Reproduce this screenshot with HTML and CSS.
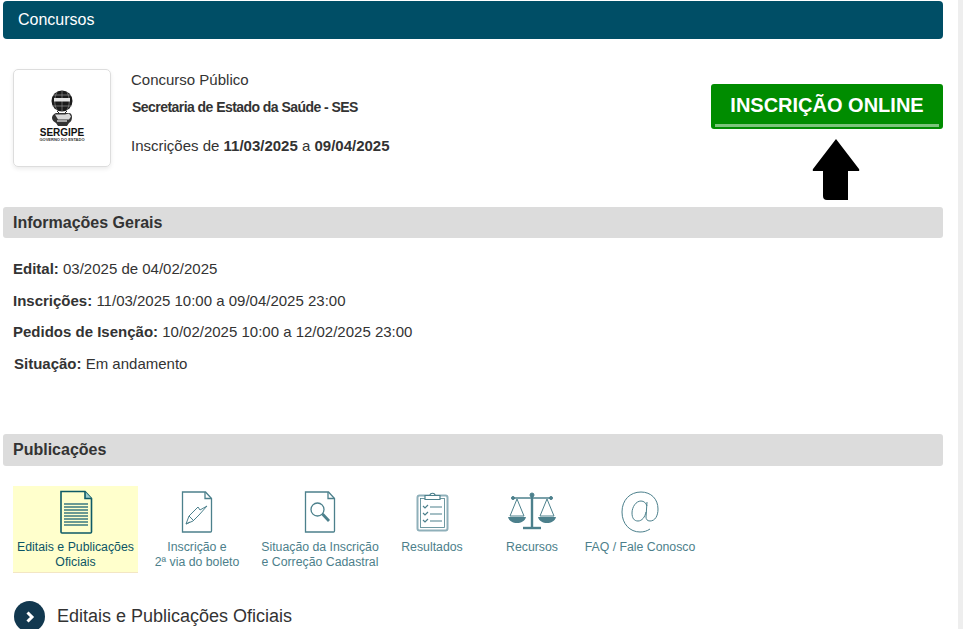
FILE: index.html
```html
<!DOCTYPE html>
<html lang="pt-BR">
<head>
<meta charset="utf-8">
<title>Concursos</title>
<link rel="stylesheet" href="styles.css">
</head>
<body>
<div class="scrollstrip"></div>
<main class="page">
  <header class="title">Concursos</header>

  <section class="summary">
    <div class="logo-card">
      <div class="logo">
        <svg class="logo-mark" width="24" height="37" viewBox="0 0 24 37">
          <circle cx="12" cy="11" r="10.500" fill="#1a1a1a"/>
          <path d="M3 5h18M1.800 16h20.400" stroke="#aaa" stroke-width=".6"/>
          <path d="M12 .5v21M7 2c-3 6-3 13 0 18M17 2c3 6 3 13 0 18" stroke="#999" stroke-width=".6" fill="none"/>
          <rect x="4" y="8" width="16" height="3.500" fill="#e4e4e4"/>
          <path d="M7 21l3 3M17 21l-3 3" stroke="#222" stroke-width="1"/>
          <path d="M2 28c0-3 3-5 5-5h12c2 0 3 2 3 4 0 3-1 5-3 6l-2 3H8l-2-3c-2-1-4-3-4-5z" fill="#333"/>
          <path d="M5 24.500h10l4-1 2 3-2 3H8z" fill="#d8d8d8"/>
          <path d="M7 31h10" stroke="#ccc" stroke-width="1.500"/>
        </svg>
        <span class="logo-name">SERGIPE</span>
        <span class="logo-sub">GOVERNO DO ESTADO</span>
      </div>
    </div>
    <div class="summary-text">
      <p class="kind">Concurso Público</p>
      <p class="org">Secretaria de Estado da Saúde - SES</p>
      <p class="dates">Inscrições de <b>11/03/2025</b> a <b>09/04/2025</b></p>
    </div>
    <div class="cta">
      <a class="cta-button" href="#">INSCRIÇÃO ONLINE</a>
      <svg class="cta-arrow" width="48" height="62" viewBox="0 0 48 62">
        <path d="M24 1 L47 31 Q48 33 46 33 L36 33 V62 H15 Q11 62 11 58 V33 H2 Q0 33 1 31 Z" fill="#000"/>
      </svg>
    </div>
  </section>

  <h2 class="bar">Informações Gerais</h2>
  <div class="info">
    <p><b>Edital:</b> 03/2025 de 04/02/2025</p>
    <p><b>Inscrições:</b> 11/03/2025 10:00 a 09/04/2025 23:00</p>
    <p><b>Pedidos de Isenção:</b> 10/02/2025 10:00 a 12/02/2025 23:00</p>
    <p class="status"><b>Situação:</b> Em andamento</p>
  </div>

  <h2 class="bar bar-tall">Publicações</h2>
  <nav class="tabs">
    <a class="tab tab-active" href="#">
      <svg width="34" height="44" viewBox="0 0 34 44" fill="none" stroke="#0e5a66" stroke-width="1.600">
        <path d="M2 1.500h24l6.500 7V42a1 1 0 0 1-1 1H3a1 1 0 0 1-1-1z"/>
        <path d="M26 1.500v7h6.500" fill="#9cc"/>
        <path d="M5 14h24M5 17h24M5 20h24M5 23h24M5 26h24M5 29h24M5 32h24M5 35h24" stroke-width="1.500" stroke="#3b7a80"/>
      </svg>
      <span>Editais e Publicações<br>Oficiais</span>
    </a>
    <a class="tab tab-boleto" href="#">
      <svg width="32" height="42" viewBox="0 0 32 42" fill="none" stroke="#4c808c" stroke-width="1.300">
        <path d="M1.500 1h23l6 6.500V40a1 1 0 0 1-1 1h-28z"/>
        <path d="M24 1v6.500h6.500"/>
        <path d="M5 33l3-8 9-9 2 3 7-4-8 9-6 6zM8 25l5 5M5 33l4-2" stroke-width="1"/>
      </svg>
      <span>Inscrição e<br>2ª via do boleto</span>
    </a>
    <a class="tab tab-situacao" href="#">
      <svg width="32" height="42" viewBox="0 0 32 42" fill="none" stroke="#4c808c" stroke-width="1.300">
        <path d="M1.500 1h23l6 6.500V40a1 1 0 0 1-1 1h-28z"/>
        <path d="M24 1v6.500h6.500"/>
        <circle cx="13.500" cy="18.500" r="6.500"/>
        <path d="M18.500 23l6.500 7" stroke-width="2.800"/>
      </svg>
      <span>Situação da Inscrição<br>e Correção Cadastral</span>
    </a>
    <a class="tab tab-result" href="#">
      <svg width="33" height="40" viewBox="0 0 33 40" fill="none" stroke="#4c808c" stroke-width="1.200">
        <rect x="1.500" y="3.500" width="30" height="35" rx="2" stroke-width="2" stroke="#8fb0ba"/>
        <rect x="4.500" y="6.500" width="24" height="29" stroke-width=".8"/>
        <path d="M9 3.500h15v4H9zM14 3.500c0-3 5-3 5 0" fill="#fff"/>
        <path d="M7 14l2 2 3-3M7 21l2 2 3-3M7 28l2 2 3-3M14 15h12M14 22h12M14 29h12"/>
      </svg>
      <span>Resultados</span>
    </a>
    <a class="tab tab-recursos" href="#">
      <svg width="48" height="40" viewBox="0 0 48 40" fill="none" stroke="#4c808c" stroke-width="1">
        <path d="M5 6h38" stroke-width="1.500"/>
        <circle cx="5" cy="6" r="1.500" fill="#4c808c"/>
        <circle cx="43" cy="6" r="1.500" fill="#4c808c"/>
        <circle cx="24" cy="3" r="2" fill="#4c808c"/>
        <path d="M24 2v33" stroke-width="2.400"/>
        <path d="M15 36h18" stroke-width="2.400"/>
        <path d="M9 7L2 24M9 7l7 17M2 24h14M39 7l-7 17M39 7l7 17M32 24h14"/>
        <path d="M0 25h18c-1 4-5 6-9 6s-8-2-9-6zM30 25h18c-1 4-5 6-9 6s-8-2-9-6z" fill="#4c808c" stroke="none"/>
      </svg>
      <span>Recursos</span>
    </a>
    <a class="tab tab-faq" href="#">
      <svg width="38" height="42" viewBox="0 0 38 42" fill="none" stroke="#4c808c" stroke-width="1">
        <path d="M29 38c-3 2-6 3-10 3C9 41 1 33 1 21S9 1 20 1c10 0 17 7 17 17 0 7-3 12-8 12-3 0-4-2-4-4l1-15M26 15c-1-3-3-5-6-5-5 0-9 6-9 12 0 5 2 8 6 8 4 0 7-4 8-9"/>
      </svg>
      <span>FAQ / Fale Conosco</span>
    </a>
  </nav>

  <div class="subhead">
    <span class="chevron">
      <svg width="12" height="14" viewBox="0 0 12 14" fill="none" stroke="#fff" stroke-width="3"><path d="M3.500 2.500L8 7l-4.500 4.500"/></svg>
    </span>
    <h3>Editais e Publicações Oficiais</h3>
  </div>
</main>
</body>
</html>
```

FILE: styles.css
```css
* { box-sizing: border-box; }
html, body { margin: 0; height: 629px; overflow: hidden; background: #fff; }
body {
  position: relative;
  font-family: "Liberation Sans", Arial, sans-serif;
  color: #333;
  font-size: 15px;
}
.scrollstrip { position: absolute; top: 0; right: 0; bottom: 0; width: 5px; background: #eee; }
.page { width: 940px; margin-left: 3px; padding-top: 1px; }
p, h2, h3 { margin: 0; }

.title {
  height: 38px;
  padding-left: 15px;
  background: #004e66;
  color: #fff;
  font-size: 16px;
  line-height: 38px;
  border-radius: 4px;
}

.summary { display: flex; height: 168px; padding: 30px 0 0 10px; }
.logo-card {
  width: 98px; height: 98px;
  border: 1px solid #ddd;
  border-radius: 5px;
  box-shadow: 0 2px 4px rgba(0,0,0,.08);
  display: flex; align-items: center; justify-content: center;
}
.logo { display: flex; flex-direction: column; align-items: center; margin-bottom: 5px; }
.logo-mark { display: block; }
.logo-name { font-size: 10px; line-height: 10px; font-weight: 700; color: #111; margin-top: 1px; }
.logo-sub { font-size: 4px; line-height: 4px; font-weight: 700; color: #333; white-space: nowrap; }
.summary-text { margin-left: 20px; padding-top: 2px; }
.kind { font-size: 15px; line-height: 18px; }
.org { font-size: 14px; line-height: 18px; font-weight: 700; margin: 9px 0 0 1px; letter-spacing: -.55px; }
.dates { font-size: 15px; line-height: 18px; margin-top: 21px; }

.cta { margin-left: auto; padding-top: 15px; width: 232px; display: flex; flex-direction: column; align-items: center; }
.cta-button {
  display: block;
  width: 232px; height: 45px;
  background: #008c00;
  border-radius: 3px;
  color: #fff;
  font-size: 20px;
  font-weight: 700;
  line-height: 42px;
  text-align: center;
  text-decoration: none;
  position: relative;
}
.cta-button::after {
  content: "";
  position: absolute; left: 4px; right: 4px; bottom: 2px; height: 3px;
  background: #7cc47c;
}
.cta-arrow { margin-top: 9px; display: block; margin-left: 17px; }

.bar {
  height: 31px;
  padding-left: 10px;
  background: #dcdcdc;
  border-radius: 3px;
  font-size: 16px;
  line-height: 31px;
  font-weight: 700;
}
.bar-tall { height: 32px; }
.info { height: 196px; padding: 22px 10px 0; font-size: 15px; }
.info p { line-height: 18px; margin-bottom: 13.600px; }
.info .status { margin-left: 1px; }

.tabs { display: flex; padding: 20px 0 0 10px; align-items: flex-start; }
.tab {
  display: flex; flex-direction: column; align-items: center;
  height: 87px; padding-top: 4px;
  font-size: 12.300px; line-height: 15px; text-align: center;
  color: #4d7f8b; text-decoration: none;
}
.tab svg { display: block; height: 44px; }
.tab span { display: block; margin-top: 6px; white-space: nowrap; }
.tab-active { width: 125px; background: #ffffcc; color: #0c5566; border-bottom: 1px solid #f3e6c4; }
.tab-boleto { width: 118px; }
.tab-situacao { width: 128px; }
.tab-result { width: 88px; margin-left: 4px; }
.tab-recursos { width: 62px; margin-left: 25px; }
.tab-faq { width: 112px; margin-left: 21px; }

.subhead { display: flex; align-items: center; gap: 12px; margin: 28px 0 0 11px; }
.chevron {
  width: 31px; height: 31px; border-radius: 50%;
  background: #12384f;
  display: flex; align-items: center; justify-content: center;
}
.subhead h3 { font-size: 18px; font-weight: 400; line-height: 31px; }
```
